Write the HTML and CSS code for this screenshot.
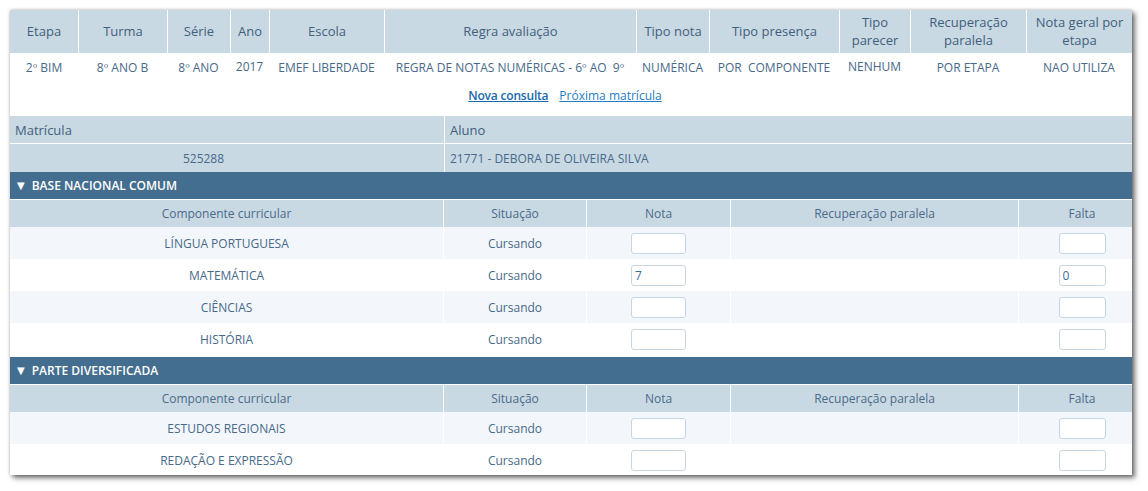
FILE: index.html
```html
<!DOCTYPE html>
<html lang="pt-BR">
<head>
<meta charset="utf-8">
<title>Lançamento de notas</title>
<link rel="stylesheet" href="styles.css">
</head>
<body>
<div class="panel">
  <table class="info">
    <colgroup>
      <col class="w68"><col class="w89"><col class="w63"><col class="w39"><col class="w115"><col class="w252"><col class="w73"><col class="w130"><col class="w71"><col class="w116"><col class="w106">
    </colgroup>
    <thead>
      <tr>
        <th>Etapa</th><th>Turma</th><th>Série</th><th>Ano</th><th>Escola</th><th>Regra avaliação</th><th>Tipo nota</th><th>Tipo presença</th><th>Tipo parecer</th><th>Recuperação paralela</th><th>Nota geral por etapa</th>
      </tr>
    </thead>
    <tbody>
      <tr class="data">
        <td>2º BIM</td><td>8º ANO B</td><td>8º ANO</td><td class="up">2017</td><td>EMEF LIBERDADE</td><td>REGRA DE NOTAS NUMÉRICAS - 6º AO&nbsp; 9º</td><td>NUMÉRICA</td><td>POR&nbsp; COMPONENTE</td><td class="up">NENHUM</td><td>POR ETAPA</td><td>NAO UTILIZA</td>
      </tr>
      <tr class="links">
        <td colspan="11"><a href="#" class="strong">Nova consulta</a><a href="#" class="next">Próxima matrícula</a></td>
      </tr>
    </tbody>
  </table>

  <table class="aluno">
    <colgroup><col class="w434"><col class="w688"></colgroup>
    <tr class="head"><th>Matrícula</th><th>Aluno</th></tr>
    <tr class="val"><td class="mat">525288</td><td>21771 - DEBORA DE OLIVEIRA SILVA</td></tr>
  </table>

  <div class="group-title"><span class="tri">&#9660;</span>BASE NACIONAL COMUM</div>
  <table class="comp">
    <colgroup><col class="w433"><col class="w143"><col class="w144"><col class="w288"><col class="w127"></colgroup>
    <tr class="head"><th>Componente curricular</th><th>Situação</th><th>Nota</th><th>Recuperação paralela</th><th class="falta">Falta</th></tr>
    <tr class="alt"><td>LÍNGUA PORTUGUESA</td><td>Cursando</td><td><input class="nota" type="text"></td><td></td><td class="falta"><input class="fal" type="text"></td></tr>
    <tr><td>MATEMÁTICA</td><td>Cursando</td><td><input class="nota" type="text" value="7"></td><td></td><td class="falta"><input class="fal" type="text" value="0"></td></tr>
    <tr class="alt"><td>CIÊNCIAS</td><td>Cursando</td><td><input class="nota" type="text"></td><td></td><td class="falta"><input class="fal" type="text"></td></tr>
    <tr><td>HISTÓRIA</td><td>Cursando</td><td><input class="nota" type="text"></td><td></td><td class="falta"><input class="fal" type="text"></td></tr>
  </table>

  <div class="group-title second"><span class="tri">&#9660;</span>PARTE DIVERSIFICADA</div>
  <table class="comp">
    <colgroup><col class="w433"><col class="w143"><col class="w144"><col class="w288"><col class="w127"></colgroup>
    <tr class="head"><th>Componente curricular</th><th>Situação</th><th>Nota</th><th>Recuperação paralela</th><th class="falta">Falta</th></tr>
    <tr class="alt"><td>ESTUDOS REGIONAIS</td><td>Cursando</td><td><input class="nota" type="text"></td><td></td><td class="falta"><input class="fal" type="text"></td></tr>
    <tr><td>REDAÇÃO E EXPRESSÃO</td><td>Cursando</td><td><input class="nota" type="text"></td><td></td><td class="falta"><input class="fal" type="text"></td></tr>
  </table>
</div>
</body>
</html>
```

FILE: styles.css
```css
* { box-sizing: border-box; }
html, body { margin: 0; padding: 0; background: #fff; }
body {
  padding: 10px;
  font-family: "Open Sans", "DejaVu Sans", sans-serif;
  font-size: 12px;
  color: #47698a;
}
.panel {
  width: 1122px;
  height: 465px;
  overflow: hidden;
  background: #fff;
  box-shadow: 3px 3px 5px rgba(0,0,0,0.55), 0 0 3px rgba(0,0,0,0.25);
}
table {
  border-collapse: separate;
  border-spacing: 0;
  table-layout: fixed;
}
th, td { padding: 0; text-align: center; white-space: nowrap; }

.w68 { width: 68px; } .w89 { width: 89px; } .w63 { width: 63px; } .w39 { width: 39px; }
.w115 { width: 115px; } .w252 { width: 252px; } .w73 { width: 73px; } .w130 { width: 130px; }
.w71 { width: 71px; } .w116 { width: 116px; } .w106 { width: 106px; }
.w434 { width: 434px; } .w688 { width: 688px; }
.w433 { width: 433px; } .w143 { width: 143px; } .w144 { width: 144px; } .w288 { width: 288px; } .w127 { width: 127px; }

/* top info table */
.info { width: 1122px; }
.info th {
  height: 43px;
  background: #c9d9e3;
  color: #3f607d;
  font-weight: 400;
  font-size: 13px;
  line-height: 18px;
  padding-bottom: 1px;
  white-space: normal;
  border-left: 1px solid #fff;
}
.info th:first-child { border-left: 0; }
.info .data td { height: 29px; padding-bottom: 1px; }
.info .data td.up { padding-bottom: 3px; }
.info .links td { height: 29px; padding-bottom: 2px; padding-right: 12px; }
.links a { color: #1f7cc4; text-decoration: underline; }
.links a.strong { color: #1769ad; font-weight: 600; letter-spacing: -0.2px; }
.links a.next { margin-left: 11px; }

/* aluno table */
.aluno { width: 1122px; margin-top: 5px; }
.aluno th, .aluno td {
  background: #c9d9e3;
  text-align: left;
  padding-left: 5px;
  border-left: 1px solid #fff;
}
.aluno th:first-child, .aluno td:first-child { border-left: 0; }
.aluno th { height: 28px; font-weight: 400; color: #3f607d; border-bottom: 1px solid #fff; font-size: 13px; }
.aluno td { height: 28px; }
.aluno td.mat { text-align: center; padding-left: 0; padding-right: 47px; }

/* groups */
.group-title {
  height: 28px;
  background: #446e8f;
  color: #fff;
  font-weight: 600;
  font-size: 12px;
  line-height: 28px;
  padding-left: 7px;
  border-bottom: 1px solid #fff;
}
.group-title.second { margin-top: 2px; }
.tri { font-size: 10px; margin-right: 7px; position: relative; top: -1px; }

.comp { width: 1135px; }
.comp th {
  height: 27px;
  background: #c9d9e3;
  font-weight: 400;
  color: #4a6b8a;
  border-left: 1px solid #fff;
}
.comp th:first-child, .comp td:first-child { border-left: 0; }
.comp td {
  height: 32px;
  border-left: 1px solid #fff;
}
.comp tr.alt td { background: #f3f7fb; }

input {
  font-family: "Open Sans", "DejaVu Sans", sans-serif;
  font-size: 12px;
  color: #3a6d9e;
  border: 1px solid #c6d7e3;
  border-radius: 3px;
  background: #fff;
  height: 21px;
  padding: 0 3px;
  margin: 0;
  vertical-align: middle;
  outline: none;
}
input.nota { width: 55px; }
input.fal { width: 47px; }
```
